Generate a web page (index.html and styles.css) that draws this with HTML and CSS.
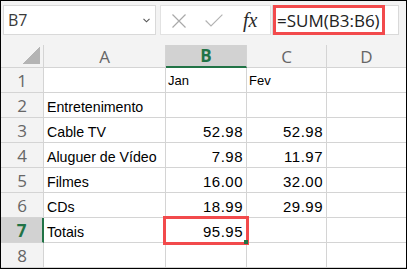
FILE: index.html
```html
<!DOCTYPE html>
<html lang="pt">
<head>
<meta charset="utf-8">
<title>Excel SUM</title>
<link rel="stylesheet" href="styles.css">
</head>
<body>
<div class="frame">
  <div class="toolbar">
    <div class="namebox">
      <span class="nb-text">B7</span>
      <svg class="chev" width="7" height="5" viewBox="0 0 7 5"><polyline points="0.5,0.8 3.5,3.8 6.5,0.8" fill="none" stroke="#555" stroke-width="1.1"/></svg>
    </div>
    <div class="fxbuttons">
      <svg class="ic-x" width="14" height="14" viewBox="0 0 14 14"><path d="M0.5 0.5 L13.5 13.5 M13.5 0.5 L0.5 13.5" stroke="#a9a9a9" stroke-width="1.2" fill="none"/></svg>
      <svg class="ic-check" width="18" height="13" viewBox="0 0 18 13"><polyline points="0.6,6.5 6,12 17.4,0.6" fill="none" stroke="#b3b3b3" stroke-width="1.2"/></svg>
      <span class="fx">fx</span>
    </div>
    <div class="formula">
      <span class="formula-text">=SUM(B3:B6)</span>
    </div>
  </div>

  <div class="sheet">
    <div class="corner"><span class="tri"></span></div>
    <div class="ch">A</div>
    <div class="ch sel-col">B</div>
    <div class="ch">C</div>
    <div class="ch last">D</div>

    <div class="rh">1</div>
    <div class="c"></div>
    <div class="c small">Jan</div>
    <div class="c small">Fev</div>
    <div class="c last"></div>

    <div class="rh">2</div>
    <div class="c">Entretenimento</div>
    <div class="c"></div>
    <div class="c"></div>
    <div class="c last"></div>

    <div class="rh">3</div>
    <div class="c">Cable TV</div>
    <div class="c num">52.98</div>
    <div class="c num">52.98</div>
    <div class="c last"></div>

    <div class="rh">4</div>
    <div class="c">Aluguer de Vídeo</div>
    <div class="c num">7.98</div>
    <div class="c num">11.97</div>
    <div class="c last"></div>

    <div class="rh">5</div>
    <div class="c">Filmes</div>
    <div class="c num">16.00</div>
    <div class="c num">32.00</div>
    <div class="c last"></div>

    <div class="rh">6</div>
    <div class="c">CDs</div>
    <div class="c num">18.99</div>
    <div class="c num">29.99</div>
    <div class="c last"></div>

    <div class="rh sel-row">7</div>
    <div class="c">Totais</div>
    <div class="c num active">95.95<span class="hl"></span><span class="handle"></span></div>
    <div class="c"></div>
    <div class="c last"></div>

    <div class="rh">8</div>
    <div class="c"></div>
    <div class="c"></div>
    <div class="c"></div>
    <div class="c last"></div>
  </div>
</div>
</body>
</html>
```

FILE: styles.css
```css
* { box-sizing: border-box; }
html, body { margin: 0; padding: 0; background: #fff; }

.frame {
  width: 407px;
  height: 269px;
  border: 1px solid #000;
  background: #f3f3f3;
  overflow: hidden;
}

.toolbar {
  height: 44px;
  display: flex;
  align-items: flex-start;
  padding: 4px 0 0 2px;
}

.namebox {
  width: 153px;
  height: 30px;
  background: #fff;
  border: 1px solid #d9d9d9;
  display: flex;
  align-items: center;
  justify-content: space-between;
  padding: 0 5px 0 4px;
}
.nb-text {
  font-family: "Open Sans", "Noto Sans", sans-serif;
  font-size: 16px;
  color: #3a3a3a;
}
.chev { margin-top: 1px; }

.fxbuttons {
  margin-left: 4px;
  width: 111px;
  height: 30px;
  background: #fff;
  border: 1px solid #e2e2e2;
  display: flex;
  align-items: center;
  padding-left: 11px;
}
.ic-x { margin-top: 1px; }
.ic-check { margin-left: 19px; margin-top: 1px; }
.fx {
  margin-left: 20px;
  font-family: "Liberation Serif", serif;
  font-style: italic;
  font-size: 20px;
  color: #2a2a2a;
  line-height: 1;
}

.formula {
  margin-left: 1px;
  width: 127px;
  height: 30px;
  background: #fff;
  border: 1px solid #d9d9d9;
  display: flex;
}
.formula-text {
  margin: -1px 0 -1px 0;
  width: 112px;
  height: 30px;
  border: 3px solid #f24a4c;
  padding: 0 0 0 1px;
  display: flex;
  align-items: center;
  font-family: "Open Sans", "Noto Sans", sans-serif;
  font-size: 17px;
  color: #222;
  white-space: nowrap;
}

.sheet {
  display: grid;
  grid-template-columns: 43px 122px 81px 80px 79px;
  grid-template-rows: 23px repeat(8, 25px);
  background: #fff;
}

.corner {
  background: #f3f3f3;
  border-right: 1px solid #d4d4d4;
  border-bottom: 1px solid #d4d4d4;
  display: flex;
  align-items: flex-end;
  justify-content: flex-end;
  padding: 0 3px 3px 0;
}
.tri {
  width: 18px;
  height: 18px;
  background: linear-gradient(to bottom right, transparent 50%, #b4b4b4 50%);
}

.ch {
  background: #f3f3f3;
  border-right: 1px solid #d4d4d4;
  border-bottom: 1px solid #d4d4d4;
  display: flex;
  align-items: center;
  justify-content: center;
  font-family: "Open Sans", "Noto Sans", sans-serif;
  font-size: 17px;
  color: #666;
}
.ch.last { border-right: 0; }
.ch.sel-col {
  background: #d2d2d2;
  border-bottom: 2px solid #217346;
  color: #217346;
  font-weight: 700;
}

.rh {
  background: #f3f3f3;
  border-right: 1px solid #d4d4d4;
  border-bottom: 1px solid #d4d4d4;
  display: flex;
  align-items: center;
  justify-content: center;
  font-family: "Open Sans", "Noto Sans", sans-serif;
  font-size: 17px;
  color: #666;
}
.rh.sel-row {
  background: #d2d2d2;
  border-right: 2px solid #217346;
  color: #217346;
  font-weight: 700;
}

.c {
  border-right: 1px solid #d4d4d4;
  border-bottom: 1px solid #d4d4d4;
  display: flex;
  align-items: flex-end;
  padding: 0 3px 1px 3px;
  font-family: "Liberation Sans", Arial, sans-serif;
  font-size: 14.2px;
  line-height: 18px;
  color: #000;
  white-space: nowrap;
}
.c.last { border-right: 0; }
.c.small { font-size: 13px; padding: 0 2px 2px 2px; }
.c.num {
  justify-content: flex-end;
  font-size: 15px;
  letter-spacing: 0.5px;
  padding-right: 3px;
}

.c.active { position: relative; }
.hl {
  position: absolute;
  left: -3px;
  top: -2px;
  right: -3px;
  bottom: -3px;
  border: 3px solid #f24a4c;
  z-index: 2;
}
.handle {
  position: absolute;
  right: -2px;
  bottom: -2px;
  width: 4px;
  height: 4px;
  background: #217346;
  z-index: 3;
}
```
